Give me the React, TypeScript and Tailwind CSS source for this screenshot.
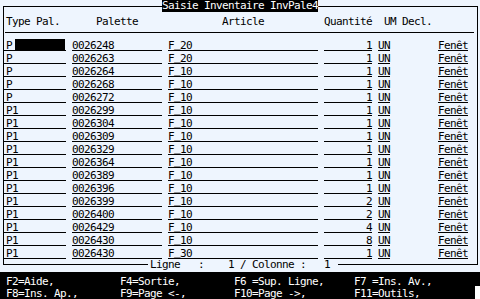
const rows = [
  { type: 'P', pal: '0026248', art: 'F_20', qty: '1' },
  { type: 'P', pal: '0026263', art: 'F_20', qty: '1' },
  { type: 'P', pal: '0026264', art: 'F_10', qty: '1' },
  { type: 'P', pal: '0026268', art: 'F_10', qty: '1' },
  { type: 'P', pal: '0026272', art: 'F_10', qty: '1' },
  { type: 'P1', pal: '0026299', art: 'F_10', qty: '1' },
  { type: 'P1', pal: '0026304', art: 'F_10', qty: '1' },
  { type: 'P1', pal: '0026309', art: 'F_10', qty: '1' },
  { type: 'P1', pal: '0026329', art: 'F_10', qty: '1' },
  { type: 'P1', pal: '0026364', art: 'F_10', qty: '1' },
  { type: 'P1', pal: '0026389', art: 'F_10', qty: '1' },
  { type: 'P1', pal: '0026396', art: 'F_10', qty: '1' },
  { type: 'P1', pal: '0026399', art: 'F_10', qty: '2' },
  { type: 'P1', pal: '0026400', art: 'F_10', qty: '2' },
  { type: 'P1', pal: '0026429', art: 'F_10', qty: '4' },
  { type: 'P1', pal: '0026430', art: 'F_10', qty: '8' },
  { type: 'P1', pal: '0026430', art: 'F_30', qty: '1' },
]

const keys = [
  ['F2=Aide,', 'F4=Sortie,', 'F6 =Sup. Ligne,', 'F7 =Ins. Av.,'],
  ['F8=Ins. Ap.,', 'F9=Page <-,', 'F10=Page ->,', 'F11=Outils,'],
]

// champ souligné, largeur fixe en px
function Field({ w, ml, right, children }: { w: string; ml: string; right?: boolean; children: React.ReactNode }) {
  return (
    <span className={`relative h-[10px] leading-[10px] border-b border-black whitespace-pre ${w} ${ml} ${right ? 'text-right' : ''}`}>
      {children}
    </span>
  )
}

// le "_" remonte un peu pour ne pas se confondre avec le soulignement
function Article({ code }: { code: string }) {
  const [a, b] = code.split('_')
  return (
    <>
      {a}
      <span className="relative top-[-2px]">_</span>
      {b}
    </>
  )
}

export default function App() {
  return (
    <div className="w-[480px] h-[299px] overflow-hidden bg-[#eef5fe] text-black text-[11px] tracking-[-0.62px] font-['DejaVu_Sans_Mono',monospace] pt-[6px]">
      {/* cadre principal */}
      <div className="relative ml-[3px] w-[475px] h-[259px] border border-black pt-[8px]">
        <div className="absolute left-[158px] top-[-7px] w-[156px] h-[12px] leading-[12px] bg-black text-white whitespace-pre">
          Saisie Inventaire InvPale4
        </div>

        {/* en-têtes */}
        <div className="flex h-[13px] leading-[13px] whitespace-pre">
          <span className="w-[92px] pl-[2px]">Type Pal.</span>
          <span className="w-[126px]">Palette</span>
          <span className="w-[102px]">Article</span>
          <span className="w-[60px]">Quantité</span>
          <span className="w-[18px]">UM</span>
          <span>Decl.</span>
        </div>
        <div className="mt-[4px] ml-[1px] w-[469px] border-t border-black" />

        {/* lignes */}
        <div className="mt-[7.5px] flex flex-col">
          {rows.map((r, i) => (
            <div key={i} className="flex h-[13px] items-start">
              <Field w="w-[62px]" ml="ml-0">
                <span className="pl-[2px]">{r.type}</span>
                {i === 0 && <span className="absolute left-[11px] top-[-1.5px] w-[50px] h-[11.5px] bg-black" />}
              </Field>
              <Field w="w-[90px]" ml="ml-[6px]">{r.pal}</Field>
              <Field w="w-[150px]" ml="ml-[6px]"><Article code={r.art} /></Field>
              <Field w="w-[48px]" ml="ml-[6px]" right>{r.qty}</Field>
              <Field w="w-[12px]" ml="ml-[6px]">UN</Field>
              <Field w="w-[30px]" ml="ml-[48px]" right>Fenêt</Field>
            </div>
          ))}
        </div>

        <div className="absolute left-[144px] top-[253px] h-[10px] leading-[10px] bg-[#eef5fe] whitespace-pre px-[2px]">
          {'Ligne   :    1 / Colonne :   1 '}
        </div>
      </div>

      {/* barre des touches */}
      <div className="relative mt-[7px] h-[27px] bg-black text-white pt-[4px]">
        {keys.map((line, i) => (
          <div key={i} className="flex h-[12px] leading-[12px] whitespace-pre pl-[6px]">
            <span className="w-[114px]">{line[0]}</span>
            <span className="w-[114px]">{line[1]}</span>
            <span className="w-[120px]">{line[2]}</span>
            <span>{line[3]}</span>
          </div>
        ))}
        <span className="absolute right-0 bottom-0 w-[5px] h-[13px] bg-white" />
      </div>
    </div>
  )
}
